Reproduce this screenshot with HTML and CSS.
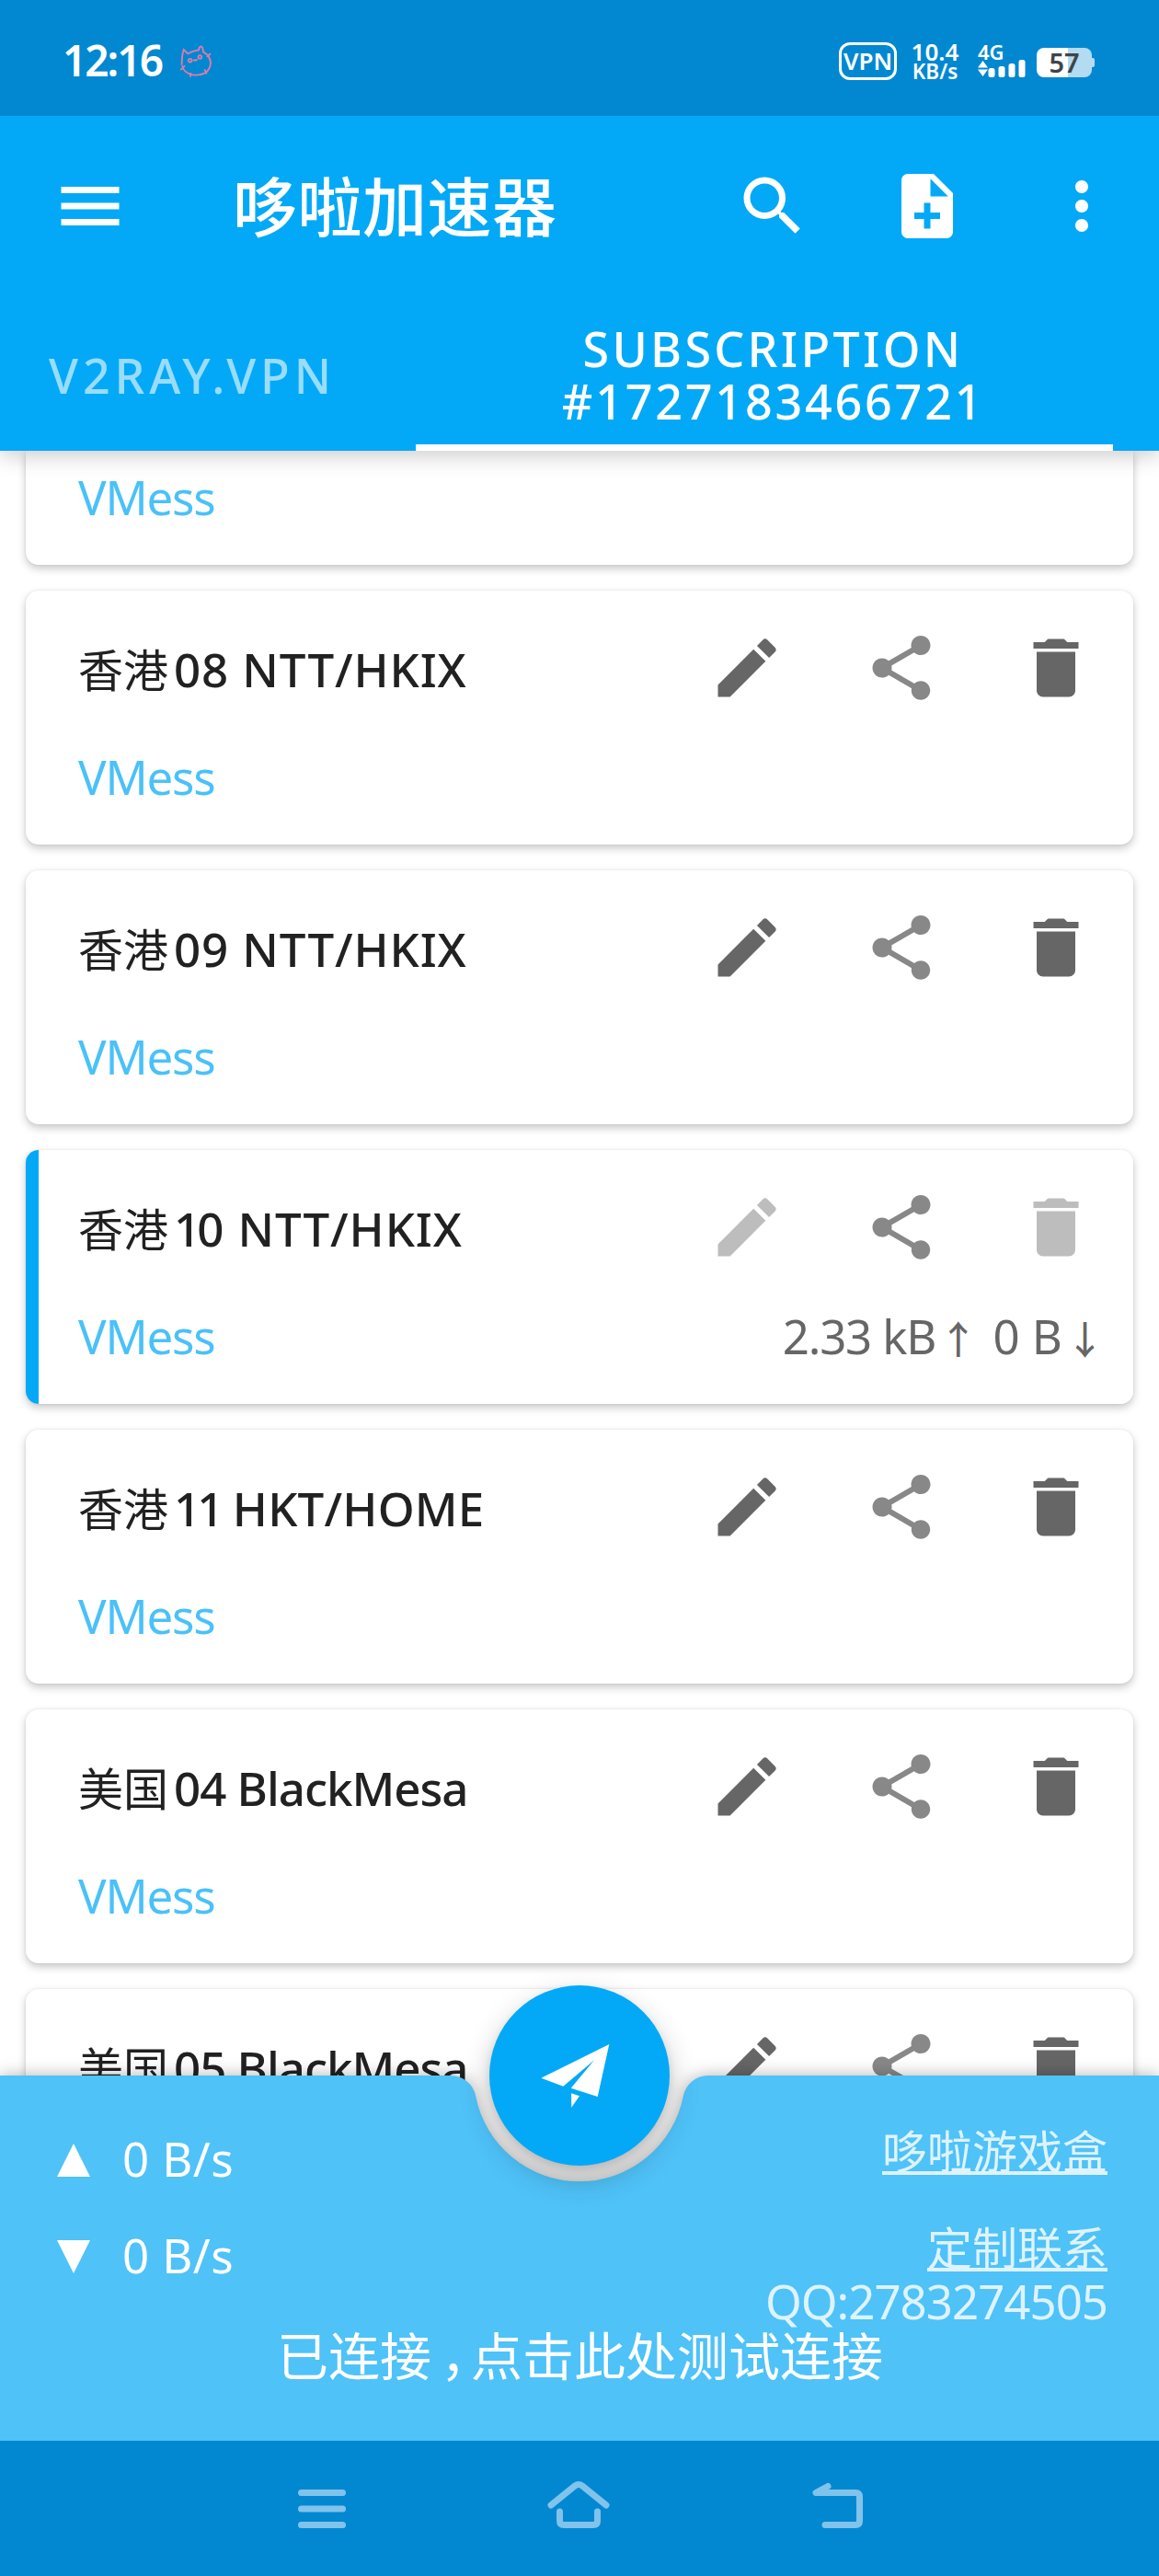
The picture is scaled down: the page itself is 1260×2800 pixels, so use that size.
FILE: index.html
```html
<!DOCTYPE html>
<html lang="zh-CN">
<head>
<meta charset="utf-8">
<title>哆啦加速器</title>
<link rel="stylesheet" href="styles.css">
</head>
<body>
<svg class="defs" aria-hidden="true">
  <symbol id="edit" viewBox="0 0 24 24"><path d="M3 17.25V21h3.75L17.81 9.94l-3.75-3.75L3 17.25zM20.71 7.04a1 1 0 0 0 0-1.41l-2.34-2.34a1 1 0 0 0-1.41 0l-1.83 1.83 3.75 3.75 1.83-1.83z"/></symbol>
  <symbol id="share" viewBox="0 0 24 24"><path d="M18 16.08c-.76 0-1.44.3-1.96.77L8.91 12.7c.05-.23.09-.46.09-.7s-.04-.47-.09-.7l7.05-4.11c.54.5 1.25.81 2.04.81 1.66 0 3-1.34 3-3s-1.34-3-3-3-3 1.34-3 3c0 .24.04.47.09.7L8.04 9.81C7.5 9.31 6.79 9 6 9c-1.66 0-3 1.34-3 3s1.34 3 3 3c.79 0 1.5-.31 2.04-.81l7.12 4.16c-.05.21-.08.43-.08.65 0 1.61 1.31 2.92 2.92 2.92s2.92-1.31 2.92-2.92-1.31-2.92-2.92-2.92z"/></symbol>
  <symbol id="delete" viewBox="0 0 24 24"><path d="M6 19c0 1.1.9 2 2 2h8c1.1 0 2-.9 2-2V7H6v12zM19 4h-3.5l-1-1h-5l-1 1H5v2h14V4z"/></symbol>
</svg>
<div class="phone">
  <div class="status">
    <div class="time">12:16</div>
    <svg class="cat" viewBox="0 0 180 180"><path d="M38 92Q38 60 44 42L58 55Q72 46 93 43Q94 32 101 31Q107 34 108 49Q131 62 132 86Q130 108 114 118Q96 127 74 124Q44 118 39 94M34 108L48 94M66 117V131M112 106L119 121M119 65L132 55M75 75Q82 80 89 73"/><circle cx="65" cy="77" r="5.5"/><circle cx="97" cy="66" r="5.5"/></svg>
    <div class="vpn">VPN</div>
    <div class="rate"><span class="rate-n">10.4</span><span class="rate-u">KB/s</span></div>
    <div class="net"><span>4G</span><svg width="52" height="19" viewBox="0 0 52 19"><path d="M0 8.500L5.500 1L11 8.500zM0 10.500L5.500 18L11 10.500z"/><rect x="11.500" y="9" width="7" height="10" rx="2.500"/><rect x="22.500" y="7" width="7" height="12" rx="2.500"/><rect x="33.500" y="4" width="7" height="15" rx="2.500"/><rect x="44.500" y="0" width="7" height="19" rx="2.500"/></svg></div>
    <div class="battery">57</div>
  </div>

  <header class="header">
    <div class="toolbar">
      <svg class="ic" viewBox="0 0 24 24"><path d="M3 18h18v-2H3v2zm0-5h18v-2H3v2zm0-7v2h18V6H3z"/></svg>
      <h1>哆啦加速器</h1>
      <div class="tools">
        <svg class="ic" viewBox="0 0 24 24"><path d="M15.500 14h-.79l-.28-.27A6.471 6.471 0 0 0 16 9.500 6.500 6.500 0 1 0 9.500 16c1.610 0 3.090-.59 4.230-1.570l.27.28v.79l5 4.990L20.490 19l-4.990-5zm-6 0C7.010 14 5 11.990 5 9.500S7.010 5 9.500 5 14 7.010 14 9.500 11.990 14 9.500 14z"/></svg>
        <svg class="ic" viewBox="0 0 24 24"><path d="M14 2H6c-1.100 0-1.990.9-1.990 2L4 20c0 1.100.89 2 1.990 2H18c1.100 0 2-.9 2-2V8l-6-6zm2 14h-3v3h-2v-3H8v-2h3v-3h2v3h3v2zm-3-7V3.500L18.500 9H13z"/></svg>
        <svg class="ic" viewBox="0 0 24 24"><path d="M12 8c1.100 0 2-.9 2-2s-.9-2-2-2-2 .9-2 2 .9 2 2 2zm0 2c-1.100 0-2 .9-2 2s.9 2 2 2 2-.9 2-2-.9-2-2-2zm0 6c-1.100 0-2 .9-2 2s.9 2 2 2 2-.9 2-2-.9-2-2-2z"/></svg>
      </div>
    </div>
    <nav class="tabs">
      <div class="tab">V2RAY.VPN</div>
      <div class="tab active"><span class="w1">SUBSCRIPTION</span><span class="w2">#1727183466721</span></div>
    </nav>
  </header>

  <main class="list">
    <article class="card partial"><div class="meta"><span class="type">VMess</span></div></article>
    <article class="card">
      <div class="top"><div class="name"><b>香港</b>08 NTT/HKIX</div><svg class="ic"><use href="#edit"/></svg><svg class="ic soft"><use href="#share"/></svg><svg class="ic"><use href="#delete"/></svg></div>
      <div class="meta"><span class="type">VMess</span></div>
    </article>
    <article class="card">
      <div class="top"><div class="name"><b>香港</b>09 NTT/HKIX</div><svg class="ic"><use href="#edit"/></svg><svg class="ic soft"><use href="#share"/></svg><svg class="ic"><use href="#delete"/></svg></div>
      <div class="meta"><span class="type">VMess</span></div>
    </article>
    <article class="card selected">
      <div class="top"><div class="name"><b>香港</b><span class="one">1</span>0 NTT/HKIX</div><svg class="ic off"><use href="#edit"/></svg><svg class="ic soft"><use href="#share"/></svg><svg class="ic off"><use href="#delete"/></svg></div>
      <div class="meta"><span class="type">VMess</span><span class="traffic"><span class="up">2.33 kB</span><i>↑</i> 0 B<i>↓</i></span></div>
    </article>
    <article class="card">
      <div class="top"><div class="name even"><b>香港</b><span class="one">11</span> HKT/HOME</div><svg class="ic"><use href="#edit"/></svg><svg class="ic soft"><use href="#share"/></svg><svg class="ic"><use href="#delete"/></svg></div>
      <div class="meta"><span class="type">VMess</span></div>
    </article>
    <article class="card">
      <div class="top"><div class="name tight"><b>美国</b>04 BlackMesa</div><svg class="ic"><use href="#edit"/></svg><svg class="ic soft"><use href="#share"/></svg><svg class="ic"><use href="#delete"/></svg></div>
      <div class="meta"><span class="type">VMess</span></div>
    </article>
    <article class="card">
      <div class="top"><div class="name tight"><b>美国</b>05 BlackMesa</div><svg class="ic"><use href="#edit"/></svg><svg class="ic soft"><use href="#share"/></svg><svg class="ic"><use href="#delete"/></svg></div>
    </article>
  </main>

  <section class="bottom">
    <svg class="shape" viewBox="0 0 1260 397"><path d="M0 0H489.800A28 28 0 0 1 517.200 22.500A115 115 0 0 0 742.800 22.500A28 28 0 0 1 770.200 0H1260V397H0Z"/></svg>
    <div class="fab"><svg viewBox="0 0 196 196"><path d="M130.300 64L56.300 100.700L80.300 109.700L114 81.300L88.700 111.700L117.700 121ZM89 117.300L98 120.300L89.300 132.700Z"/></svg></div>
    <div class="info">
      <div class="speeds">
        <div class="speed"><svg width="36" height="36" viewBox="0 0 36 36"><path d="M18 0L36 36H0Z"/></svg>0 B/s</div>
        <div class="speed"><svg width="36" height="36" viewBox="0 0 36 36"><path d="M0 0H36L18 36Z"/></svg>0 B/s</div>
      </div>
      <div class="links">
        <a class="first">哆啦游戏盒</a>
        <a>定制联系</a>
        <span>QQ:2783274505</span>
      </div>
    </div>
    <div class="message">已连接<span class="comma">，</span>点击此处测试连接</div>
  </section>

  <footer class="sysnav">
    <svg width="54" height="60" viewBox="0 0 54 60"><path d="M4.500 15.500H49.500M4.500 33H49.500M4.500 50.500H49.500"/></svg>
    <svg width="70" height="60" viewBox="0 0 70 60"><path d="M5 29L31 8Q35 5 39 8L65 29M14.500 36V46Q14.500 50.500 19 50.500H51Q55.500 50.500 55.500 46V36"/></svg>
    <svg width="60" height="60" viewBox="0 0 60 60"><path d="M20 8.500L7 15.500H50Q54.500 15.500 54.500 20V46Q54.500 50.500 50 50.500H17"/></svg>
  </footer>
</div>
</body>
</html>
```
FILE: styles.css
```css
* { box-sizing: border-box; }
body {
  margin: 0;
  background: #fff;
  font-family: "Noto Sans", "Noto Sans CJK SC", sans-serif;
  font-size: 51px;
  line-height: 60px;
}
.defs { position: absolute; width: 0; height: 0; }
.phone {
  position: relative;
  display: flex;
  flex-direction: column;
  width: 1260px;
  height: 2800px;
  overflow: hidden;
  background: #fff;
}
.ic { display: block; flex: none; width: 84px; height: 84px; fill: currentColor; }

/* system status bar */
.status {
  position: relative;
  z-index: 3;
  display: flex;
  flex: none;
  align-items: flex-start;
  height: 126px;
  padding: 35px 73px 0 68px;
  background: #0288d1;
  color: #fff;
  font-weight: 600;
}
.time { width: 117px; font-size: 46px; letter-spacing: -2px; }
.cat { width: 60px; height: 60px; margin-top: 5px; fill: none; stroke: #e07ba8; stroke-width: 5.5; }
.vpn {
  width: 63px;
  height: 41px;
  margin: 11px 0 0 auto;
  border: 3.5px solid #fff;
  border-radius: 12px;
  font-size: 26px;
  line-height: 35px;
  text-align: center;
}
.rate { display: flex; flex-direction: column; width: 53px; margin: 10px 0 0 15px; text-align: center; line-height: 22px; }
.rate-n { font-size: 26px; }
.rate-u { font-size: 22.500px; }
.net { display: flex; flex-direction: column; width: 52px; margin: 12px 0 0 20px; font-size: 22px; line-height: 18px; }
.net svg { fill: #fff; }
.battery {
  position: relative;
  width: 60px;
  height: 32px;
  margin: 17px 0 0 12px;
  border-radius: 8px;
  background: linear-gradient(90deg, #fff 34px, #b3dbf1 34px);
  color: #404448;
  font-size: 29px;
  line-height: 32px;
  text-align: center;
}
.battery::after {
  content: "";
  position: absolute;
  left: 60px;
  top: 11px;
  width: 3px;
  height: 10px;
  border-radius: 0 2px 2px 0;
  background: #b3dbf1;
}

/* app bar and tabs */
.header {
  position: relative;
  z-index: 1;
  flex: none;
  height: 364px;
  padding-top: 56px;
  background: #03a9f6;
  color: #fff;
  box-shadow: 0 4px 24px rgba(0, 0, 0, .22);
}
.toolbar { display: flex; align-items: center; height: 84px; padding: 0 42px 0 56px; }
h1 {
  margin: 0 0 4px 113px;
  font: 500 70px/84px "Noto Sans CJK SC", sans-serif;
  letter-spacing: .5px;
}
.tools { display: flex; gap: 84px; margin-left: auto; }
.tabs { display: flex; height: 166px; margin-top: 58px; padding-right: 50px; font-size: 52px; font-weight: 500; line-height: 57px; }
.tab { display: flex; align-items: center; width: 452px; padding-left: 53px; color: #99dcfb; letter-spacing: 4.900px; }
.tab.active {
  flex: 1;
  flex-direction: column;
  justify-content: center;
  padding: 7px 0 0 19px;
  border-bottom: 7px solid #fff;
  color: #fff;
}
.w1 { letter-spacing: 3.300px; }
.w2 { letter-spacing: 2.800px; }

/* server list */
.list { display: flex; flex: 1; flex-direction: column; gap: 28px; min-height: 0; padding: 0 28px; overflow: hidden; }
.card {
  flex: none;
  height: 276px;
  padding: 42px 42px 0 57px;
  border-radius: 14px;
  background: #fff;
  box-shadow: 0 4px 10px rgba(0, 0, 0, .22), 0 0 3px rgba(0, 0, 0, .08);
}
.card.partial { height: 124px; padding-top: 20px; border-radius: 0 0 14px 14px; }
.card.selected { background: linear-gradient(90deg, #03a9f6 14px, #fff 14px); }
.top { display: flex; align-items: center; gap: 84px; color: #666; }
.name { flex: 1; padding-top: 2px; color: #212121; font-weight: 500; letter-spacing: .9px; white-space: nowrap; }
.name.even { letter-spacing: .2px; }
.name.tight { letter-spacing: -1px; }
.name b { margin-right: 6px; font: 400 49px/49px "Noto Sans CJK SC", sans-serif; letter-spacing: 0; }
.one { letter-spacing: -4px; }
.soft { color: #888; }
.off { color: #bdbdbd; }
.meta { display: flex; justify-content: space-between; margin-top: 46px; margin-right: -14px; }
.partial .meta { margin-top: 0; }
.type { color: #4ac1f8; letter-spacing: -1.200px; }
.traffic { color: #666; }
.traffic i { margin: 0 3.5px; font: 500 42px/49px "Noto Sans CJK SC", sans-serif; }
.up { letter-spacing: -1.200px; }

/* bottom panel with the connect button */
.bottom { position: absolute; z-index: 2; left: 0; top: 2256px; width: 1260px; height: 397px; color: #fff; }
.shape {
  position: absolute;
  left: 0;
  top: 0;
  width: 1260px;
  height: 397px;
  overflow: visible;
  fill: #4fc2f8;
  filter: drop-shadow(0 0 9px rgba(0, 0, 0, .3));
}
.fab {
  position: absolute;
  left: 532px;
  top: -98px;
  width: 196px;
  height: 196px;
  border-radius: 50%;
  background: #03a9f6;
  box-shadow: 0 14px 32px rgba(0, 0, 0, .24), 0 4px 10px rgba(0, 0, 0, .1);
}
.fab svg { display: block; fill: #fff; }
.info { position: relative; display: flex; justify-content: space-between; padding: 51px 56px 0 62px; }
.speeds { display: flex; flex-direction: column; gap: 45px; padding-top: 9px; }
.speed { display: flex; align-items: center; gap: 35px; letter-spacing: .4px; }
.speed svg { margin-top: 3px; fill: #fff; }
.links { display: flex; flex-direction: column; align-items: flex-end; color: #def3fe; line-height: 57px; }
.links a {
  font: 400 49px/57px "Noto Sans CJK SC", sans-serif;
  text-decoration: underline 4px;
  text-decoration-skip-ink: none;
  text-underline-offset: 3px;
}
.links .first { margin-bottom: 48px; }
.links span { margin-top: 4px; letter-spacing: -1px; }
.message { position: relative; margin-top: -2px; padding-left: 301px; font: 400 56px/60px "Noto Sans CJK SC", sans-serif; white-space: nowrap; }
.comma { padding-left: 10px; letter-spacing: -23px; }

/* system navigation */
.sysnav {
  position: relative;
  z-index: 3;
  display: flex;
  flex: none;
  align-items: flex-start;
  justify-content: space-between;
  height: 147px;
  padding: 41px 320px 0 323px;
  background: #0288d1;
}
.sysnav svg { fill: none; stroke: #81c3ea; stroke-width: 7; stroke-linecap: round; stroke-linejoin: round; }
```
